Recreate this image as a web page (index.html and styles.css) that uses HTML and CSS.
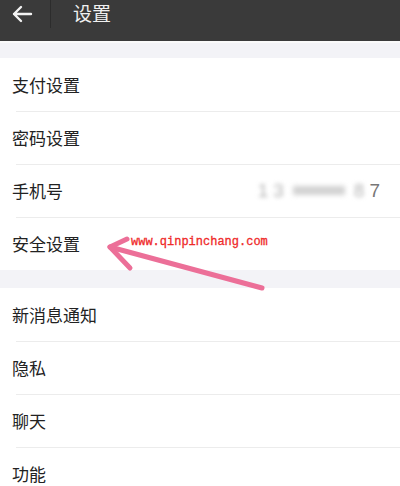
FILE: index.html
```html
<!DOCTYPE html>
<html lang="zh">
<head>
<meta charset="utf-8">
<link rel="stylesheet" href="styles.css">
</head>
<body>
<div class="page">
  <header class="topbar">
    <div class="back">
      <svg width="22" height="18" viewBox="0 0 22 18"><path d="M20 9H3M10 2L3 9l7 7" fill="none" stroke="#f2f2f2" stroke-width="2.4" stroke-linecap="round" stroke-linejoin="round"/></svg>
    </div>
    <div class="sep"></div>
    <div class="title">设置</div>
  </header>
  <div class="gap first"></div>
  <section class="group">
    <div class="row">支付设置</div>
    <div class="row">密码设置</div>
    <div class="row"><span>手机号</span><span class="phone"><span class="blur">1</span><span class="blur">3</span><span class="mask"></span><span class="blur">8</span>7</span></div>
    <div class="row">安全设置</div>
  </section>
  <div class="gap"></div>
  <section class="group">
    <div class="row">新消息通知</div>
    <div class="row">隐私</div>
    <div class="row">聊天</div>
    <div class="row">功能</div>
  </section>
  <div class="mark">www.qinpinchang.com</div>
  <svg class="arrow" width="400" height="486" viewBox="0 0 400 486">
    <g fill="none" stroke="#ec6f98" stroke-width="5" stroke-linecap="round" stroke-linejoin="round">
      <path d="M262 288L110 247"/>
      <path d="M127 239L110 247L130 268"/>
    </g>
  </svg>
</div>
</body>
</html>
```
FILE: styles.css
```css
* { box-sizing: border-box; margin: 0; padding: 0; }
html, body { width: 400px; height: 486px; overflow: hidden; background: #fff; }
body { font-family: "Noto Sans CJK SC", "Noto Sans", sans-serif; }
.page { position: relative; width: 400px; height: 486px; overflow: hidden; }
.topbar { height: 41px; background: #3a3a3a; display: flex; align-items: flex-start; }
.back { width: 50px; height: 28px; display: flex; align-items: center; padding-left: 11px; }
.sep { width: 1px; height: 28px; background: #2c2c2c; }
.title { color: #f0f0f0; font-size: 19px; line-height: 26px; margin-left: 22px; }
.gap { height: 18px; background: #f3f3f7; }
.gap.first { height: 17px; border-top: 2px solid #fafafa; }
.group { background: #fff; }
.row { height: 53px; display: flex; align-items: center; justify-content: space-between; padding: 0 20px 0 12px; font-size: 17px; color: #222; position: relative; }
.row + .row::before { content: ""; position: absolute; top: 0; left: 16px; right: 0; height: 1px; background: #ececec; }
.phone { color: #777; font-family: "Liberation Sans", sans-serif; font-size: 19px; display: flex; align-items: center; gap: 5px; }
.blur { filter: blur(2px); color: #b4b4b4; }
.mask { display: inline-block; width: 52px; height: 9px; background: #d2d2d2; filter: blur(2.5px); margin: 0 4px; }
.mark { position: absolute; left: 131px; top: 235px; font-family: "Liberation Mono", monospace; font-size: 12px; color: #ef2a2a; line-height: 14px; -webkit-text-stroke: 0.3px #ef2a2a; }
.arrow { position: absolute; left: 0; top: 0; }
```
